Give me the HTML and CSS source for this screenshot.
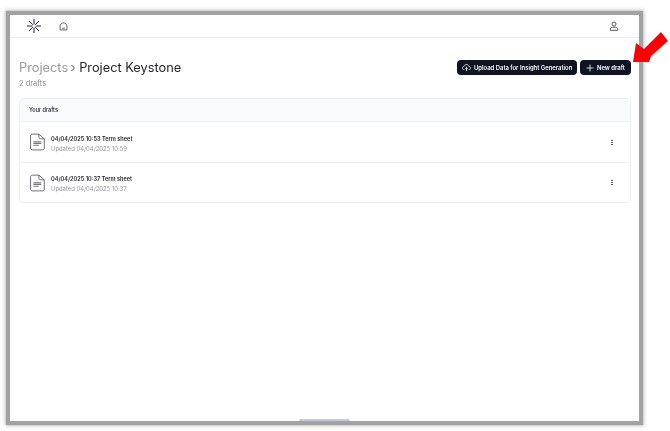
FILE: index.html
```html
<!DOCTYPE html>
<html>
    <head>
        <meta charset="utf-8">
        <meta name="viewport" content="width=device-width, initial-scale=1.0">
        <title>Project Keystone</title>
        <link rel="stylesheet" href="styles.css">
    </head>
    <body>
        <div class="window">
            <div class="topbar">
                <svg class="logo" viewBox="0 0 14 14" width="14" height="14" fill="none" stroke="#23232b" stroke-width="1">
                    <path d="M7 0V5.4M7 8.6V14M0 7H5.4M8.6 7H14M2 2L5.8 5.8M8.2 8.2L12 12M12 2L8.2 5.8M5.8 8.2L2 12"/>
                </svg>
                <svg class="home" viewBox="0 0 10 10" width="9" height="9" fill="none" stroke="#55555c" stroke-width="1">
                    <path d="M1.2 8.8V4.6C1.2 2.6 3 1 5 1S8.8 2.6 8.8 4.6V8.8Z"/>
                    <path d="M3.4 6.9H6.6"/>
                </svg>
                <svg class="user" viewBox="0 0 10 10" width="10" height="10" fill="none" stroke="#44444c" stroke-width="0.9">
                    <circle cx="5" cy="3" r="2"/>
                    <path d="M1.4 9.3V8C1.4 6.9 2.3 6.3 3.4 6.3H6.6C7.7 6.3 8.6 6.9 8.6 8V9.3Z"/>
                </svg>
            </div>

            <div class="content">
                <div class="page-head">
                    <div>
                        <h1 class="crumbs">
                            <span class="crumb-parent">Projects</span>
                            <svg class="crumb-sep" viewBox="0 0 6 8" width="6" height="8" fill="none" stroke="#44444c" stroke-width="1"><path d="M1.5 1L4.5 4L1.5 7"/></svg>
                            <span>Project Keystone</span>
                        </h1>
                        <p class="count">2 drafts</p>
                    </div>
                    <div class="actions">
                        <a class="btn btn-upload">
                            <svg viewBox="0 0 10 10" width="9" height="9" fill="none" stroke="#fff" stroke-width="0.9"><path d="M2.6 7.4H2.3C1.2 7.4 0.5 6.6 0.5 5.6S1.2 3.9 2.2 3.9C2.5 2.5 3.6 1.6 5 1.6S7.5 2.5 7.8 3.9C8.8 3.9 9.5 4.7 9.5 5.6S8.8 7.4 7.7 7.4H7.4"/><path d="M5 9V4.8M3.5 6.2L5 4.8L6.5 6.2"/></svg>
                            Upload Data for Insight Generation
                        </a>
                        <a class="btn btn-new">
                            <svg viewBox="0 0 8 8" width="8" height="8" fill="none" stroke="#fff" stroke-width="0.8"><path d="M4 0.5V7.5M0.5 4H7.5"/></svg>
                            New draft
                        </a>
                    </div>
                </div>

                <div class="card">
                    <div class="card-head">Your drafts</div>
                    <div class="row">
                        <svg class="doc" viewBox="0 0 16 18" width="15" height="18" fill="none" stroke="#55555c" stroke-width="0.9">
                            <path d="M2.5 0.6H9.5L15.2 5.6V15.4C15.2 16.6 14.4 17.4 13.2 17.4H2.5C1.4 17.4 0.6 16.6 0.6 15.4V2.6C0.6 1.4 1.4 0.6 2.5 0.6Z"/>
                            <path d="M9.5 0.6V3.6C9.5 4.9 10.2 5.6 11.4 5.6H15.2"/>
                            <path d="M3.6 8.8H12M3.6 10.6H12M3.6 12.4H9.4" stroke-width="1.2" stroke="#77777d"/>
                        </svg>
                        <div class="row-text">
                            <div class="row-title">04/04/2025 10:53 Term sheet</div>
                            <div class="row-sub">Updated 04/04/2025 10:59</div>
                        </div>
                        <div class="dots"><i></i><i></i><i></i></div>
                    </div>
                    <div class="row">
                        <svg class="doc" viewBox="0 0 16 18" width="15" height="18" fill="none" stroke="#55555c" stroke-width="0.9">
                            <path d="M2.5 0.6H9.5L15.2 5.6V15.4C15.2 16.6 14.4 17.4 13.2 17.4H2.5C1.4 17.4 0.6 16.6 0.6 15.4V2.6C0.6 1.4 1.4 0.6 2.5 0.6Z"/>
                            <path d="M9.5 0.6V3.6C9.5 4.9 10.2 5.6 11.4 5.6H15.2"/>
                            <path d="M3.6 8.8H12M3.6 10.6H12M3.6 12.4H9.4" stroke-width="1.2" stroke="#77777d"/>
                        </svg>
                        <div class="row-text">
                            <div class="row-title">04/04/2025 10:37 Term sheet</div>
                            <div class="row-sub">Updated 04/04/2025 10:37</div>
                        </div>
                        <div class="dots"><i></i><i></i><i></i></div>
                    </div>
                </div>
            </div>

            <div class="scroll-nub"></div>
        </div>

        <!-- annotation on top of the screenshot -->
        <svg class="arrow" viewBox="0 0 670 431" width="670" height="431">
            <polygon points="633,62 636,43 644,49 661,32 668,41 651,56 649,62" fill="#fe0000"/>
        </svg>
    </body>
</html>
```

FILE: styles.css
```css
html, body {
    margin: 0;
    height: 100%;
}
body {
    background: #fff;
    font-family: Inter, "Liberation Sans", sans-serif;
    color: #1c1c28;
    overflow: hidden;
    padding: 15px 31px 10px 10px;
    box-sizing: border-box;
}
.window {
    height: 406px;
    width: 629px;
    background: #fff;
    display: flex;
    flex-direction: column;
    box-shadow: 0 0 1px 4px #a2a2a2, 0 0 4px 5px #cacaca;
}
.topbar {
    height: 22px;
    border-bottom: 1px solid #f0f0f2;
    display: flex;
    align-items: center;
    padding: 0 20px 0 17px;
    flex-shrink: 0;
    filter: blur(0.3px);
}
.home {
    margin-left: 18px;
}
.user {
    margin-left: auto;
}
.content {
    padding: 0 8px 0 9px;
    filter: blur(0.3px);
}
.page-head {
    display: flex;
    justify-content: space-between;
    margin-top: 21px;
}
.crumbs {
    margin: 0;
    font-size: 12.8px;
    line-height: 18px;
    font-weight: 400;
    display: flex;
    align-items: center;
    color: #24242e;
}
.crumb-parent {
    color: #9a9aa0;
}
.crumb-sep {
    margin: 0 3px 0 2px;
}
.count {
    margin: 2px 0 0;
    font-size: 7.5px;
    line-height: 10px;
    color: #8c8c92;
}
.actions {
    display: flex;
    gap: 3px;
    margin-top: 1px;
}
.btn {
    height: 15px;
    display: flex;
    align-items: center;
    background: #0f1322;
    color: #fff;
    border-radius: 4px;
    font-size: 5.9px;
    font-weight: 600;
    white-space: nowrap;
    box-sizing: border-box;
}
.btn-upload {
    width: 120px;
    padding-left: 5px;
    gap: 3px;
}
.btn-new {
    width: 51px;
    padding-left: 6px;
    gap: 3px;
}
.card {
    margin-top: 9px;
    border: 1px solid #f0f0f3;
    border-radius: 4px;
    width: 612px;
    box-sizing: border-box;
    overflow: hidden;
}
.card-head {
    height: 22px;
    background: #f9fafb;
    border-bottom: 1px solid #f0f0f3;
    padding-left: 9px;
    font-size: 5.5px;
    font-weight: 500;
    display: flex;
    align-items: center;
}
.row {
    height: 40px;
    display: flex;
    align-items: center;
    padding: 0 17px 0 10px;
    box-sizing: border-box;
}
.row + .row {
    border-top: 1px solid #f0f0f3;
}
.doc {
    flex-shrink: 0;
}
.row-text {
    margin: 3px 0 0 6px;
}
.row-title {
    font-size: 5.6px;
    line-height: 9px;
    font-weight: 600;
    color: #24242e;
}
.row-sub {
    font-size: 5.9px;
    line-height: 9px;
    color: #9a9aa0;
}
.dots {
    margin-left: auto;
    display: flex;
    flex-direction: column;
    gap: 1px;
}
.dots i {
    width: 2px;
    height: 1px;
    background: #55555c;
    display: block;
}
.scroll-nub {
    margin-top: auto;
    align-self: center;
    width: 51px;
    height: 2px;
    background: #c5cbdc;
    border-radius: 2px 2px 0 0;
}
.arrow {
    position: absolute;
    left: 0;
    top: 0;
    pointer-events: none;
}
```
